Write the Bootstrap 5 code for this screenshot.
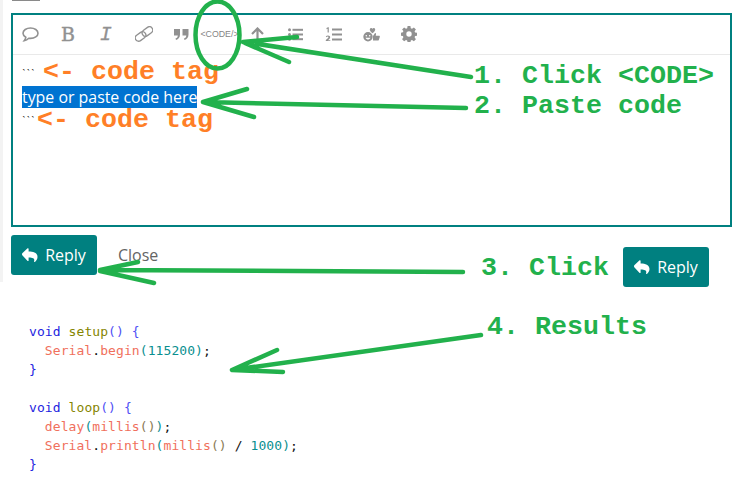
<!DOCTYPE html>
<html lang="en">
<head>
<meta charset="utf-8">
<title>Code tag how-to</title>
<link href="https://cdn.jsdelivr.net/npm/bootstrap@5.3.0/dist/css/bootstrap.min.css" rel="stylesheet">
<style>
html,body{margin:0;background:#fff;overflow:hidden}
.shot{position:relative;width:746px;height:500px;font-family:"Open Sans",sans-serif;overflow:hidden}
.edge-strip{position:absolute;left:0;top:0;width:3px;height:282px;background:#f3f3f3}
.edge-tick{position:absolute;left:12px;top:0;width:28px;height:1px;background:#8a8a8a}
.main-col{padding:13px 0 0 11px;width:732px}
.ed-box{border:2px solid #008080;height:214px}
.ed-tools{height:40px;border-bottom:1px solid #e9e9e9;gap:3.9px;padding-bottom:1px}
.ed-btn{width:34px;height:38px;color:#919191;flex:none;display:flex;align-items:center;justify-content:center;line-height:1}
.ed-b{font:400 19px "DejaVu Serif",serif;-webkit-text-stroke:.4px #919191;color:#919191}
.ed-i{font:italic 400 20px "Liberation Mono",monospace;-webkit-text-stroke:.3px #919191}
.ed-code{font:400 8.8px "Liberation Sans",sans-serif;color:#858585;white-space:nowrap}
.ed-body{padding:5px 9px;font-size:15.9px;line-height:24px;color:#222}
.tick-line{height:25px;font:700 7.5px/25px "DejaVu Sans Mono",monospace;color:#000}
.sel-txt{background:#0073d1;color:#fff;display:inline-block;height:22px;line-height:22px}
.tick-sm{height:20px;font:700 7.5px/22px "DejaVu Sans Mono",monospace;color:#000}
.act-row{margin-top:8px;height:40px}
.teal-btn{background:#008080;color:#fff;border:0;border-radius:3px;width:86px;height:40px;font-size:16px;padding:0;display:inline-flex;align-items:center;justify-content:center;gap:7px}
.teal-btn:hover{background:#008080;color:#fff}
.close-lnk{color:#646464;font-size:16px;margin-left:21px}
.code-block{margin:0;padding:0 0 0 29px;position:absolute;top:322px;left:0;font:400 13px/19px "DejaVu Sans Mono",monospace;letter-spacing:.08px;background:none;overflow:visible}
.k{color:#2323e0}.f{color:#858500}.p{color:#5050f5}.s{color:#f0705c}.n{color:#0a8f8f}.d{color:#111}.g{color:#8a7a55}
.anno-layer{position:absolute;inset:0;pointer-events:none}
.ann{position:absolute;font:700 26.67px/22px "Liberation Mono",monospace;white-space:pre}
.ann-g{color:#22b14c}.ann-o{color:#ff7f27}
.reply-float{position:absolute;left:623px;top:247px}
</style>
</head>
<body>
<div class="shot">
  <div class="edge-strip"></div>
  <div class="edge-tick"></div>
  <div class="main-col">
    <div class="ed-box">
      <div class="ed-tools d-flex align-items-center">
        <span class="ed-btn"><svg width="17" height="15" viewBox="0 0 17 15" fill="none" stroke="currentColor" stroke-width="1.6"><path d="M8.500 1C4.400 1 1 3.300 1 6.200c0 1.700 1.100 3.100 2.800 4.100-.2 1.300-.8 2.300-1.600 3.400 1.800-.3 3.400-1.200 4.600-2.400.6.100 1.100.1 1.700.1 4.100 0 7.500-2.300 7.500-5.200S12.600 1 8.500 1z"/></svg></span>
        <span class="ed-btn ed-b">B</span>
        <span class="ed-btn ed-i">I</span>
        <span class="ed-btn"><svg width="18" height="16" viewBox="0 0 18 16" fill="none" stroke="currentColor" stroke-width="1.300"><g transform="rotate(-36 9 8)"><rect x="-1" y="4.700" width="11.500" height="6.600" rx="3.300"/><rect x="7.500" y="4.700" width="11.500" height="6.600" rx="3.300"/></g></svg></span>
        <span class="ed-btn"><svg width="15" height="12" viewBox="0 0 15 12" fill="currentColor"><path d="M0 1h6v5.500C6 9.500 4.500 11.300 2 12l-.5-1.500C3 10 3.800 9 3.800 7.500H0zM8.500 1h6v5.500c0 3-1.500 4.800-4 5.500L10 10.500c1.500-.5 2.300-1.500 2.300-3H8.500z"/></svg></span>
        <span class="ed-btn ed-code">&lt;CODE/&gt;</span>
        <span class="ed-btn"><svg width="13" height="14" viewBox="0 0 13 14" fill="none" stroke="currentColor" stroke-width="2.200"><path d="M6.500 14V2M1 7l5.500-5.500L12 7"/></svg></span>
        <span class="ed-btn"><svg width="15" height="13" viewBox="0 0 15 13" fill="currentColor"><circle cx="1.500" cy="1.800" r="1.500"/><circle cx="1.500" cy="6.500" r="1.500"/><circle cx="1.500" cy="11.200" r="1.500"/><rect x="4.500" y=".8" width="10.500" height="2"/><rect x="4.500" y="5.500" width="10.500" height="2"/><rect x="4.500" y="10.200" width="10.500" height="2"/></svg></span>
        <span class="ed-btn"><svg width="17" height="15" viewBox="0 0 17 15" fill="currentColor"><path d="M1.500 1 3 .2h.8v5.300H2.600V1.700l-1.100.5zM.8 14v-.9l2.300-2.200c.5-.5.5-1.300-.3-1.300-.5 0-.9.300-1.300.7l-.7-.8C1.400 8.800 2.100 8.500 3 8.500c1.400 0 2.200.8 2.200 1.800 0 .8-.5 1.400-1.100 2l-1.100 1h2.300V14z"/><rect x="7" y="1.500" width="10" height="2"/><rect x="7" y="6.500" width="10" height="2"/><rect x="7" y="11.500" width="10" height="2"/></svg></span>
        <span class="ed-btn"><svg width="17" height="15" viewBox="0 0 17 15" fill="currentColor"><path fill-rule="evenodd" d="M5 5a4.700 4.700 0 1 1 0 9.400A4.700 4.700 0 0 1 5 5zM3.300 8a.8.800 0 1 0 0 1.600.8.800 0 0 0 0-1.600zm3.400 0a.8.800 0 1 0 0 1.600.8.800 0 0 0 0-1.600zM2.500 10.800c.5 1.200 1.500 1.800 2.500 1.800s2-.6 2.500-1.800z"/><path d="M9.500 6.200C7.500 4.700 6.800 3.700 6.800 2.500 6.800 1.300 8.500.3 9.500 1.800c1-1.500 2.700-.5 2.700.7 0 1.200-.7 2.200-2.700 3.700z"/><path d="M10 13.500V9l2-3c.8 0 1.200.7 1 1.500l-.3 1.200H16c.8 0 1 .7.800 1.300l-1 3c-.2.400-.5.500-.8.500z"/></svg></span>
        <span class="ed-btn"><svg width="16" height="16" viewBox="0 0 16 16" fill="currentColor"><path fill-rule="evenodd" d="M6.600 0h2.800l.4 2.200 1.200.5L12.900 1.400l2 2-1.300 1.900.5 1.200 2.200.4v2.800l-2.200.4-.5 1.200 1.300 1.900-2 2-1.900-1.300-1.200.5-.4 2.200H6.600l-.4-2.200-1.200-.5-1.900 1.300-2-2 1.300-1.900-.5-1.200-2.200-.4V6.700l2.200-.4.5-1.200L1.100 3.400l2-2L5 2.700l1.200-.5zM8 5.300a2.700 2.700 0 1 0 0 5.400 2.700 2.700 0 0 0 0-5.400z"/></svg></span>
      </div>
      <div class="ed-body">
        <div class="tick-line">```</div>
        <div><span class="sel-txt">type or paste code here</span></div>
        <div class="tick-sm">```</div>
      </div>
    </div>
    <div class="act-row d-flex align-items-center">
      <button type="button" class="btn teal-btn"><svg width="16" height="14" viewBox="0 0 16 14" fill="currentColor"><path d="M.3 5.200 5.600.3C6 0 6.600.2 6.600.8v2.600c4.900.1 8.900 1.100 8.900 5.700 0 1.900-1.200 3.800-2.600 4.800-.4.300-1 0-.8-.6.700-2.400-.3-3.700-5.500-3.800v2.900c0 .6-.6.800-1 .5L.3 7.300c-.4-.6-.4-1.500 0-2.100z"/></svg>Reply</button>
      <span class="close-lnk">Close</span>
    </div>
  </div>
<pre class="code-block"><span class="k">void</span> <span class="f">setup</span><span class="p">()</span> <span class="p">{</span>
  <span class="s">Serial</span><span class="d">.</span><span class="s">begin</span><span class="n">(115200)</span><span class="d">;</span>
<span class="k">}</span>

<span class="k">void</span> <span class="f">loop</span><span class="p">()</span> <span class="p">{</span>
  <span class="s">delay</span><span class="n">(</span><span class="s">millis</span><span class="g">()</span><span class="n">)</span><span class="d">;</span>
  <span class="s">Serial</span><span class="d">.</span><span class="s">println</span><span class="n">(</span><span class="s">millis</span><span class="g">()</span> <span class="d">/</span> <span class="n">1000)</span><span class="d">;</span>
<span class="k">}</span></pre>
  <button type="button" class="btn teal-btn reply-float"><svg width="16" height="14" viewBox="0 0 16 14" fill="currentColor"><path d="M.3 5.200 5.600.3C6 0 6.600.2 6.600.8v2.600c4.900.1 8.900 1.100 8.900 5.700 0 1.900-1.200 3.800-2.600 4.800-.4.300-1 0-.8-.6.700-2.400-.3-3.700-5.500-3.800v2.900c0 .6-.6.800-1 .5L.3 7.300c-.4-.6-.4-1.500 0-2.100z"/></svg>Reply</button>
  <div class="anno-layer">
    <span class="ann ann-o" style="left:43px;top:61px">&lt;- code tag</span>
    <span class="ann ann-o" style="left:37px;top:109px">&lt;- code tag</span>
    <span class="ann ann-g" style="left:474px;top:65px">1. Click &lt;CODE&gt;</span>
    <span class="ann ann-g" style="left:474px;top:95px">2. Paste code</span>
    <span class="ann ann-g" style="left:481px;top:257px">3. Click</span>
    <span class="ann ann-g" style="left:487px;top:316px">4. Results</span>
    <svg class="position-absolute top-0 start-0" width="746" height="500" viewBox="0 0 746 500" fill="none" stroke="#22b14c" stroke-width="4.500" stroke-linecap="round" stroke-linejoin="round">
      <ellipse cx="217.500" cy="35" rx="22" ry="33.500"/>
      <path d="M471 77 245 42M243 42 297 37M245 43 289 62"/>
      <path d="M466 108 203 102M203 102 247 89M203 102 254 117"/>
      <path d="M463 272 100 270M100 270 138 262M100 271 154 283"/>
      <path d="M481 335 232 370M232 370 277 350M232 370 283 372"/>
    </svg>
  </div>
</div>
<script src="https://cdn.jsdelivr.net/npm/bootstrap@5.3.0/dist/js/bootstrap.bundle.min.js"></script>
</body>
</html>
